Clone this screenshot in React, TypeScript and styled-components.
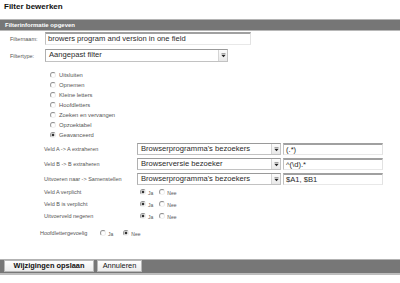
import React, { FC } from "react";
import styled, { createGlobalStyle } from "styled-components";

const GlobalStyle = createGlobalStyle`
  html, body {
    margin: 0;
    padding: 0;
    background: #fff;
  }
  body {
    font-family: "Liberation Sans", Arial, sans-serif;
    color: #222;
  }
`;

const filterTypes = [
  { label: "Uitsluiten", checked: false },
  { label: "Opnemen", checked: false },
  { label: "Kleine letters", checked: false },
  { label: "Hoofdletters", checked: false },
  { label: "Zoeken en vervangen", checked: false },
  { label: "Opzoektabel", checked: false },
  { label: "Geavanceerd", checked: true },
];

const fieldRows = [
  { label: "Veld A -> A extraheren", select: "Browserprogramma's bezoekers", value: "(.*)" },
  { label: "Veld B -> B extraheren", select: "Browserversie bezoeker", value: "^(\\d).*" },
  { label: "Uitvoeren naar -> Samenstellen", select: "Browserprogramma's bezoekers", value: "$A1, $B1" },
];

const yesNoRows = ["Veld A verplicht", "Veld B is verplicht", "Uitvoerveld negeren"];

const App: FC = () => {
  return (
    <StyledPage>
      <GlobalStyle />
      <StyledTitle>Filter bewerken</StyledTitle>
      <StyledSectionBar>Filterinformatie opgeven</StyledSectionBar>

      <StyledForm>
        <StyledBasicRow>
          <StyledLabel $width={35}>Filternaam:</StyledLabel>
          <StyledTextBox $width={206} $height={13}>browers program and version in one field</StyledTextBox>
        </StyledBasicRow>
        <StyledBasicRow $gap={4}>
          <StyledLabel $width={35}>Filtertype:</StyledLabel>
          <Dropdown width={183} height={13} text="Aangepast filter" />
        </StyledBasicRow>

        <StyledRadioList>
          {filterTypes.map((t) => (
            <StyledRadioItem key={t.label}>
              <StyledRadio $checked={t.checked} />
              <StyledOptionText>{t.label}</StyledOptionText>
            </StyledRadioItem>
          ))}
        </StyledRadioList>

        <StyledFieldBlock>
          {fieldRows.map((r) => (
            <StyledFieldRow key={r.label}>
              <StyledLabel $width={93}>{r.label}</StyledLabel>
              <Dropdown width={144} height={12} text={r.select} />
              <StyledTextBox $width={100} $height={12} $ml={2}>
                {r.value}
              </StyledTextBox>
            </StyledFieldRow>
          ))}
          {yesNoRows.map((label, i) => (
            <StyledChoiceRow key={label} $first={i === 0}>
              <StyledLabel $width={96}>{label}</StyledLabel>
              <YesNo yes />
            </StyledChoiceRow>
          ))}
        </StyledFieldBlock>

        <StyledCaseRow>
          <StyledLabel $width={60}>Hoofdlettergevoelig</StyledLabel>
          <YesNo yes={false} spread />
        </StyledCaseRow>
      </StyledForm>

      <StyledButtonBar>
        <StyledButton $width={90} $strong>
          Wijzigingen opslaan
        </StyledButton>
        <StyledButton $width={45}>Annuleren</StyledButton>
      </StyledButtonBar>
    </StyledPage>
  );
};

export default App;

const Dropdown: FC<{ width: number; height: number; text: string }> = ({ width, height, text }) => (
  <StyledSelect $width={width} $height={height}>
    <StyledSelectText>{text}</StyledSelectText>
    <StyledSelectArrow>
      <svg width="5" height="5" viewBox="0 0 5 5">
        <rect x="0.5" y="0.5" width="4" height="0.8" fill="#555" />
        <path d="M0.5 2 L4.5 2 L2.5 4.3 Z" fill="#222" />
      </svg>
    </StyledSelectArrow>
  </StyledSelect>
);

const YesNo: FC<{ yes: boolean; spread?: boolean }> = ({ yes, spread }) => (
  <StyledYesNo>
    <StyledRadio $checked={yes} />
    <StyledSmallText>Ja</StyledSmallText>
    <StyledRadio $checked={!yes} $ml={spread ? 10 : 6} />
    <StyledSmallText>Nee</StyledSmallText>
  </StyledYesNo>
);

const StyledPage = styled.div`
  width: 400px;
  height: 283px;
  overflow: hidden;
`;
const StyledTitle = styled.h1`
  margin: 0;
  height: 19px;
  padding: 1px 0 0 4px;
  box-sizing: border-box;
  font-size: 8px;
  line-height: 11px;
  font-weight: bold;
  color: #111;
`;
const StyledSectionBar = styled.div`
  height: 12px;
  box-sizing: border-box;
  border-top: 1px solid #b4b4b4;
  border-bottom: 1px solid #b8b8b8;
  background: #767676;
  color: #fff;
  font-size: 6px;
  font-weight: bold;
  line-height: 10px;
  padding-left: 5px;
`;
const StyledForm = styled.div`
  display: flex;
  flex-direction: column;
`;
const StyledBasicRow = styled.div<{ $gap?: number }>`
  display: flex;
  align-items: center;
  padding-left: 10px;
  margin-top: ${(p) => p.$gap ?? 1}px;
`;
const StyledLabel = styled.span<{ $width: number }>`
  width: ${(p) => p.$width}px;
  flex: none;
  font-size: 5.5px;
  color: #555;
  white-space: nowrap;
`;
const StyledTextBox = styled.div<{ $width: number; $height: number; $ml?: number }>`
  width: ${(p) => p.$width}px;
  height: ${(p) => p.$height}px;
  margin-left: ${(p) => p.$ml ?? 0}px;
  box-sizing: border-box;
  border: 1px solid;
  border-color: #a0a0a0 #e2e2e2 #e8e8e8 #c0c0c0;
  border-top-width: 2px;
  background: #fff;
  font-size: 7.6px;
  line-height: 9px;
  padding-left: 2px;
  color: #2a2a2a;
  white-space: nowrap;
  overflow: hidden;
`;
const StyledSelect = styled.div<{ $width: number; $height: number }>`
  display: flex;
  width: ${(p) => p.$width}px;
  height: ${(p) => p.$height}px;
  box-sizing: border-box;
  border: 1px solid #c2c2c2;
  border-top-color: #9a9a9a;
  border-left-color: #b0b0b0;
  background: #fff;
`;
const StyledSelectText = styled.span`
  flex: 1;
  font-size: 7.6px;
  line-height: 10px;
  padding-left: 3px;
  color: #2a2a2a;
  white-space: nowrap;
  overflow: hidden;
`;
const StyledSelectArrow = styled.span`
  width: 8px;
  display: flex;
  align-items: center;
  justify-content: center;
  border-left: 1px solid #d4d4d4;
  background: linear-gradient(#fcfcfc, #e8e8e8);
`;
const StyledRadioList = styled.div`
  display: flex;
  flex-direction: column;
  margin-top: 8px;
  padding-left: 50px;
`;
const StyledRadioItem = styled.div`
  display: flex;
  align-items: center;
  height: 10px;
`;
const StyledRadio = styled.span<{ $checked: boolean; $ml?: number }>`
  flex: none;
  width: 6px;
  height: 6px;
  margin-left: ${(p) => p.$ml ?? 0}px;
  border-radius: 50%;
  box-sizing: border-box;
  border: 1px solid;
  border-color: #8a8a8a #ececec #f0f0f0 #999;
  background: ${(p) =>
    p.$checked ? "radial-gradient(circle at 50% 50%, #333 0 1.2px, #fff 1.7px)" : "#fff"};
`;
const StyledOptionText = styled.span`
  font-size: 5.8px;
  color: #555;
  margin-left: 3px;
`;
const StyledFieldBlock = styled.div`
  display: flex;
  flex-direction: column;
  padding-left: 44px;
  margin-top: 3px;
`;
const StyledFieldRow = styled.div`
  display: flex;
  align-items: center;
  height: 12px;
  margin-bottom: 3px;
`;
const StyledChoiceRow = styled.div<{ $first: boolean }>`
  display: flex;
  align-items: center;
  height: 12px;
  margin-top: ${(p) => (p.$first ? -2 : 0)}px;
`;
const StyledYesNo = styled.span`
  display: flex;
  align-items: center;
`;
const StyledSmallText = styled.span`
  font-size: 5px;
  color: #555;
  margin-left: 2px;
  padding-top: 2px;
`;
const StyledCaseRow = styled.div`
  display: flex;
  align-items: center;
  height: 10px;
  margin-top: 6px;
  padding-left: 40px;
`;
const StyledButtonBar = styled.div`
  display: flex;
  gap: 3px;
  margin-top: 21px;
  height: 16px;
  box-sizing: border-box;
  border-top: 1px solid #b2b2b2;
  border-bottom: 2px solid #bdbdbd;
  background: #777;
  padding-left: 4px;
`;
const StyledButton = styled.div<{ $width: number; $strong?: boolean }>`
  width: ${(p) => p.$width}px;
  height: 12px;
  box-sizing: border-box;
  border: 1px solid #b8b8b8;
  background: linear-gradient(#fefefe, #ececec);
  font-size: 7.4px;
  line-height: 10px;
  font-weight: ${(p) => (p.$strong ? "bold" : "normal")};
  color: #111;
  text-align: center;
  white-space: nowrap;
`;
